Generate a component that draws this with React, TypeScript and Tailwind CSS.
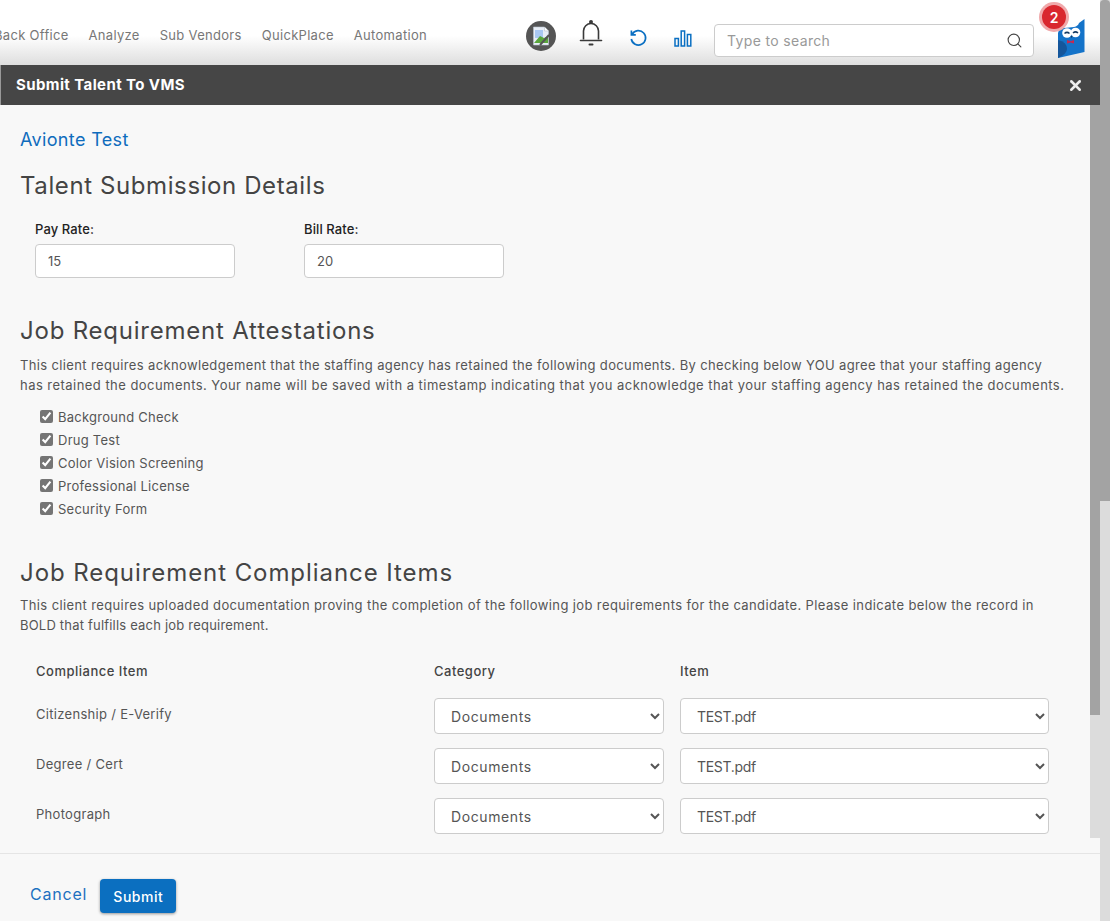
import { Search, X } from "lucide-react";

const navItems = ["Back Office", "Analyze", "Sub Vendors", "QuickPlace", "Automation"];
const attestations = ["Background Check", "Drug Test", "Color Vision Screening", "Professional License", "Security Form"];
const complianceItems = ["Citizenship / E-Verify", "Degree / Cert", "Photograph"];

function BrokenAvatar() {
  return (
    <div className="w-[30px] h-[30px] rounded-full bg-[#555] flex items-center justify-center">
      <svg width="18" height="20" viewBox="0 0 18 20">
        <path d="M1.5 1h11l4 4v14h-15z" fill="#e8eef7" stroke="#b9c2cc" strokeWidth="0.6" />
        <path d="M12.5 1v4h4" fill="#fff" stroke="#b9c2cc" strokeWidth="0.6" />
        <path d="M3 4h8v8H3z" fill="#a9c8f2" />
        <path d="M2 17l6-7 4 2 4-2v7H2z" fill="#5aa63c" />
        <path d="M8 19l9-10" stroke="#555" strokeWidth="2" />
      </svg>
    </div>
  );
}

function BellIcon() {
  return (
    <svg width="24" height="28" viewBox="0 0 24 28" fill="none" stroke="#3a3a3a" strokeWidth="1.6">
      <path d="M4.5 20.5V12a7.5 7.5 0 0 1 15 0v8.5" />
      <path d="M1.5 21.5h21" strokeLinecap="round" />
      <circle cx="12" cy="3" r="1.2" fill="#3a3a3a" />
      <path d="M10.5 25.5h3" strokeLinecap="round" strokeWidth="2" />
    </svg>
  );
}

function UndoIcon() {
  return (
    <svg width="19" height="18" viewBox="0 0 19 18" fill="none" stroke="#0a6fc2" strokeWidth="1.7">
      <path d="M3.2 5.2A7.2 7.2 0 1 1 2.3 10" />
      <path d="M2.4 1.6v4.2h4.4" />
    </svg>
  );
}

function BarsIcon() {
  return (
    <svg width="18" height="17" viewBox="0 0 18 17" fill="none" stroke="#0a6fc2" strokeWidth="1.5">
      <rect x="1" y="8.5" width="3.4" height="7.5" />
      <rect x="7.2" y="1" width="3.4" height="15" />
      <rect x="13.4" y="4.5" width="3.4" height="11.5" />
    </svg>
  );
}

function Owl() {
  return (
    <svg width="27" height="39" viewBox="0 0 27 39">
      <path d="M0 14 Q1 9 6 9 L16 8 Q20 7 21 4 L26.5 0 V33 L0 39 Z" fill="#1473c9" />
      <path d="M0 21 Q9 23 9 30 Q9 35 0 39 Z" fill="#15569b" />
      <circle cx="9" cy="14" r="4.8" fill="#fff" />
      <circle cx="17.5" cy="13.5" r="4.8" fill="#fff" />
      <path d="M6.5 14.5q2.5-2.2 5 0M15 14q2.5-2.2 5 0" fill="none" stroke="#143a63" strokeWidth="1.5" />
      <path d="M12.4 17l1.2 2 1-2.2z" fill="#143a63" />
      <path d="M9 21l3.5 1.2 3.5-1.2v3.6l-3.5-1.2-3.5 1.2z" fill="#c9284f" />
    </svg>
  );
}

function Heading({ children, className }: { children: string; className: string }) {
  return <h2 className={"text-[24px] leading-[30px] text-[#444] " + className}>{children}</h2>;
}

function FieldSelect({ value, className }: { value: string; className: string }) {
  return (
    <select
      defaultValue={value}
      className={"h-[36px] pl-[12px] bg-white border border-[#ccc] rounded-[4px] text-[14px] text-[#555] " + className}
    >
      <option>{value}</option>
    </select>
  );
}

function RateField({ label, value }: { label: string; value: string }) {
  return (
    <div className="w-[200px]">
      <label className="block text-[13px] leading-[18px] font-medium text-[#222] tracking-[0.1px]">{label}</label>
      <input
        defaultValue={value}
        className="mt-[6px] w-full h-[34px] px-[12px] bg-white border border-[#ccc] rounded-[4px] text-[13px] text-[#555]"
      />
    </div>
  );
}

export default function App() {
  return (
    <div className="w-[1110px] h-[921px] flex overflow-hidden bg-white font-['Inter',sans-serif]">
      <div className="w-[1100px] flex flex-col">
        <header className="relative h-[65px] shrink-0 flex items-start bg-[linear-gradient(to_bottom,#fff_0%,#fff_55%,#dedede_100%)]">
          <nav className="w-[447px] h-[65px] pr-[20px] flex justify-end items-start pt-[26px] gap-[20px] overflow-hidden text-[13px] leading-[18px] text-[#777] tracking-[0.3px] whitespace-nowrap shrink-0">
            {navItems.map((item) => (
              <span key={item}>{item}</span>
            ))}
          </nav>
          <div className="ml-[79px] mt-[21px]"><BrokenAvatar /></div>
          <div className="ml-[23px] mt-[19px]"><BellIcon /></div>
          <div className="ml-[26px] mt-[29px]"><UndoIcon /></div>
          <div className="ml-[26px] mt-[30px]"><BarsIcon /></div>
          <div className="ml-[22px] mt-[24px] w-[320px] h-[33px] bg-white border border-[#ccc] rounded-[4px] flex items-center pl-[12px] pr-[10px] justify-between">
            <span className="text-[14px] text-[#999] tracking-[0.35px]">Type to search</span>
            <Search size={17} strokeWidth={1.6} className="text-[#444]" />
          </div>
          <div className="ml-[24px] mt-[19px]"><Owl /></div>
          <div className="absolute left-[1039px] top-[2px] w-[30px] h-[30px] rounded-full bg-[#f0a9ab] flex items-center justify-center">
            <div className="w-[24px] h-[24px] rounded-full bg-[#d9272e] flex items-center justify-center text-white text-[14px] font-semibold">2</div>
          </div>
        </header>

        <div className="h-[40px] shrink-0 bg-[#464646] border-l border-[#999] flex items-center justify-between pl-[15px] pr-[16px]">
          <span className="text-white text-[15px] font-bold tracking-[0.4px]">Submit Talent To VMS</span>
          <X size={17} strokeWidth={3.5} className="text-[#eee]" />
        </div>

        <div className="flex-1 flex min-h-0 bg-[#f8f8f8]">
          <main className="w-[1090px] pl-[20px] text-[#555]">
            <div className="pt-[22px] text-[18px] leading-[26px] text-[#0f6cbd] tracking-[0.35px]">Avionte Test</div>
            <Heading className="mt-[18px] tracking-[0.6px]">Talent Submission Details</Heading>
            <div className="mt-[19px] pl-[15px] flex gap-[69px]">
              <RateField label="Pay Rate:" value="15" />
              <RateField label="Bill Rate:" value="20" />
            </div>

            <Heading className="mt-[38px] tracking-[0.78px]">Job Requirement Attestations</Heading>
            <p className="mt-[9px] text-[13px] leading-[20px] whitespace-nowrap tracking-[0.36px]">
              This client requires acknowledgement that the staffing agency has retained the following documents. By checking below YOU agree that your staffing agency
              <br />
              <span className="tracking-[0.46px]">has retained the documents. Your name will be saved with a timestamp indicating that you acknowledge that your staffing agency has retained the documents.</span>
            </p>
            <ul className="mt-[11px] pl-[20px]">
              {attestations.map((item) => (
                <li key={item} className="h-[23px] flex items-center text-[13px] gap-[5px] tracking-[0.25px]">
                  <input type="checkbox" defaultChecked className="w-[13px] h-[13px] mb-[3px] accent-[#757575]" />
                  {item}
                </li>
              ))}
            </ul>

            <Heading className="mt-[37px] tracking-[0.93px]">Job Requirement Compliance Items</Heading>
            <p className="mt-[7px] text-[13px] leading-[20px] whitespace-nowrap tracking-[0.38px]">
              This client requires uploaded documentation proving the completion of the following job requirements for the candidate. Please indicate below the record in
              <br />
              <span className="tracking-[0.2px]">BOLD that fulfills each job requirement.</span>
            </p>

            <div className="mt-[27px] pl-[16px] grid grid-cols-[398px_246px_369px] text-[13px] tracking-[0.5px] font-medium text-[#444]">
              <div className="h-[20px]">Compliance Item</div>
              <div className="h-[20px]">Category</div>
              <div className="h-[20px]">Item</div>
            </div>
            <div className="mt-[7px] pl-[16px] flex flex-col gap-[14px] text-[13px] pt-[9px]">
              {complianceItems.map((item) => (
                <div key={item} className="grid grid-cols-[398px_246px_369px] items-start h-[36px]">
                  <div className="leading-[32px] tracking-[0.3px]">{item}</div>
                  <FieldSelect value="Documents" className="w-[230px] tracking-[0.6px]" />
                  <FieldSelect value="TEST.pdf" className="w-[369px] tracking-[-0.3px]" />
                </div>
              ))}
            </div>
          </main>
          <div className="w-[10px] h-[733px] bg-[#dcdcdc]">
            <div className="h-[610px] bg-[#a3a3a3]" />
          </div>
        </div>

        <footer className="h-[68px] shrink-0 bg-[#f8f8f8] border-t border-[#e5e5e5] flex items-start pl-[30px] pt-[25px] gap-[13px]">
          <a className="text-[16px] leading-[30px] text-[#1d70c0] tracking-[0.8px]">Cancel</a>
          <button className="w-[76px] h-[34px] bg-[#0b6fc0] rounded-[4px] text-white text-[14px] font-medium tracking-[0.5px] shadow-[0_1px_3px_rgba(0,0,0,0.4)]">Submit</button>
        </footer>
      </div>
      <div className="w-[10px] bg-[#dcdcdc]">
        <div className="h-[501px] bg-[#a3a3a3] rounded-t-[4px]" />
      </div>
    </div>
  );
}
